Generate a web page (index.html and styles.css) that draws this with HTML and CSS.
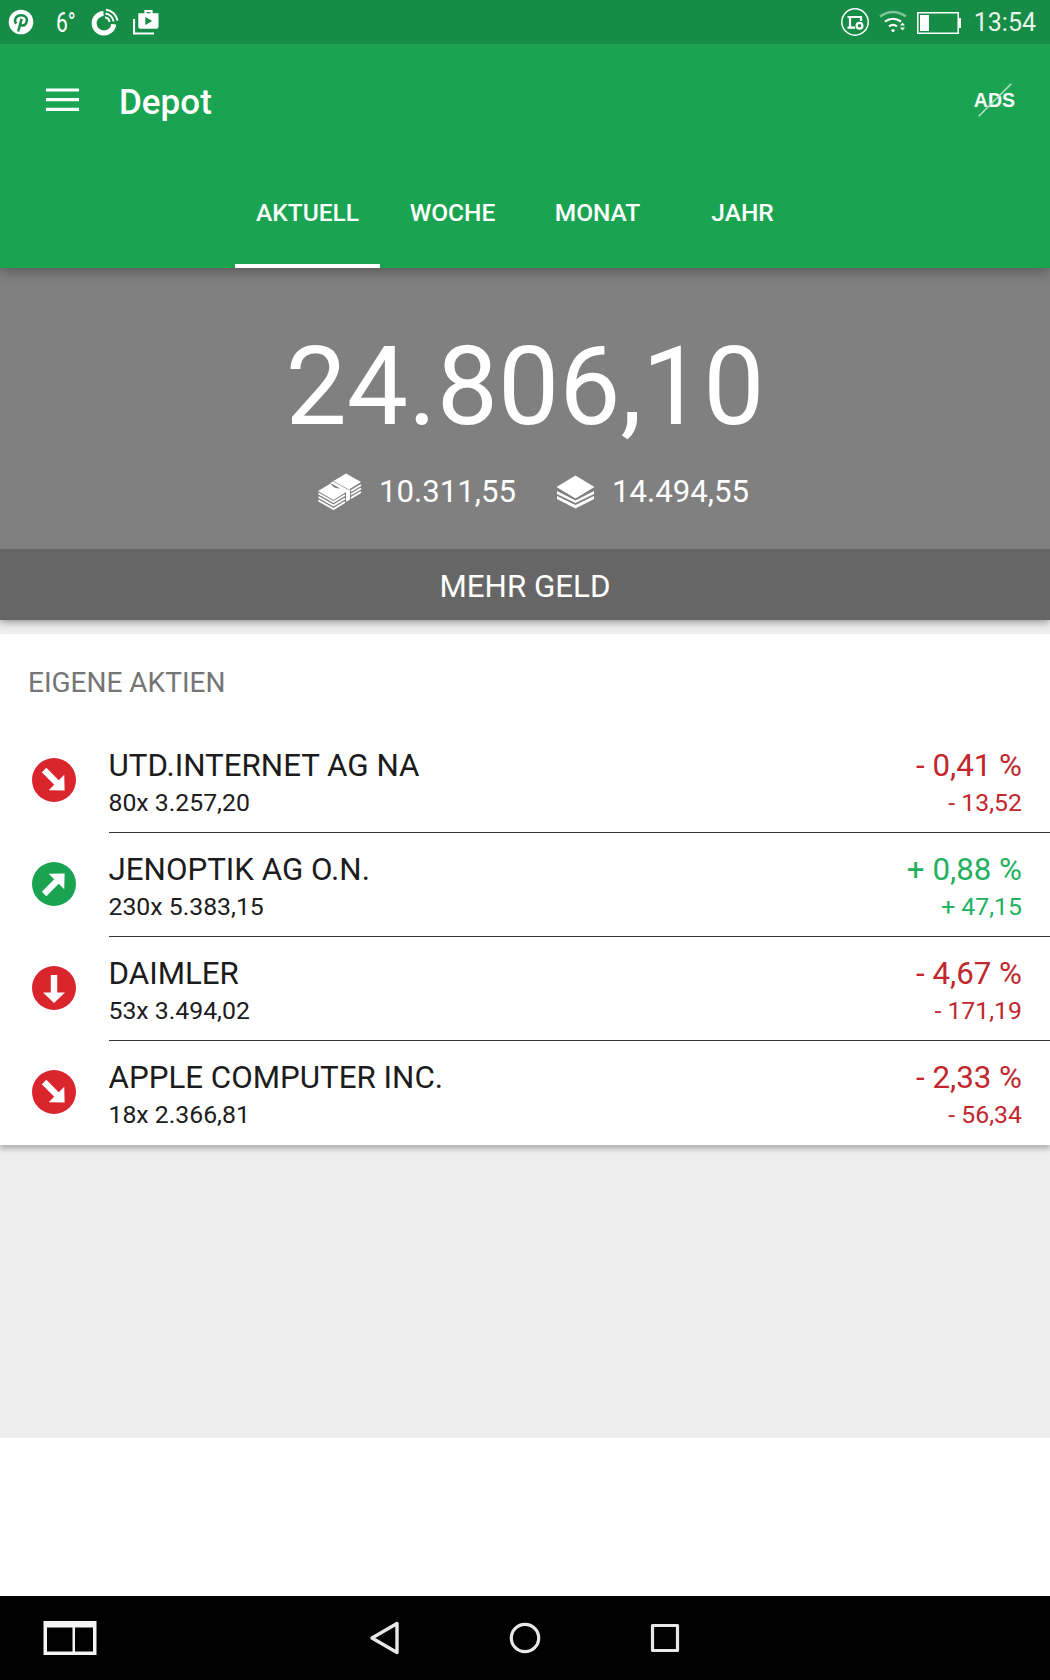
FILE: index.html
```html
<!DOCTYPE html>
<html lang="de">
<head>
    <meta charset="UTF-8">
    <meta name="viewport" content="width=device-width, initial-scale=1.0">
    <title>Depot</title>
    <link rel="stylesheet" href="styles.css">
</head>
<body>

    <!-- Statusleiste -->
    <div class="status-bar">
        <div class="status-left">
            <svg class="icon-pin" width="26" height="26" viewBox="0 0 26 26">
                <circle cx="13" cy="13" r="12.3" fill="#fff"/>
                <path d="M8.2 14.6C5.6 11.4 7.6 6.3 13.2 6.3c4 0 6.2 2.5 5.6 6-.6 3.400-3.300 4.800-5.200 4-1-.4-1.400-1-1.400-1M13.600 9.800L10.200 22.500" fill="none" stroke="#168c46" stroke-width="2.500"/>
            </svg>
            <span class="temperature">6°</span>
            <svg class="icon-ring" width="29" height="29" viewBox="0 0 29 29">
                <path d="M13.500 5.500A9.800 9.800 0 1 0 23.700 16.200" fill="none" stroke="#fff" stroke-width="5"/>
                <path d="M15 9.500a5 5 0 0 1 4.500 4.500M15.500 5.500a9 9 0 0 1 8 8M16 1.700a13 13 0 0 1 11.500 11" fill="none" stroke="#fff" stroke-width="2"/>
            </svg>
            <svg class="icon-store" width="26" height="26" viewBox="0 0 26 26">
                <path d="M1 10v14.500h20" fill="none" stroke="#fff" stroke-width="2.200"/>
                <path d="M12.500 5V2h6v3" fill="none" stroke="#fff" stroke-width="2.200"/>
                <path d="M5.300 4.300h20.200v13.500q0 2-2 2H7.300q-2 0-2-2zM12.300 8v8l7-4z" fill="#fff" fill-rule="evenodd"/>
            </svg>
        </div>
        <div class="status-right">
            <svg class="icon-cast" width="30" height="30" viewBox="0 0 30 30">
                <circle cx="15" cy="15" r="13.200" fill="none" stroke="#fff" stroke-width="1.500"/>
                <path d="M7.500 10H21v4M10 10v10.500M7.500 20.700H15" fill="none" stroke="#fff" stroke-width="2.200"/>
                <circle cx="19.500" cy="18.800" r="2.900" fill="none" stroke="#fff" stroke-width="2.200"/>
            </svg>
            <svg class="icon-wifi" width="28" height="24" viewBox="0 0 28 24">
                <path d="M1 6.500Q14-2.500 27 6.500" fill="none" stroke="#7fc79b" stroke-width="2.400"/>
                <path d="M6 11.500q8-5.500 16 0M10 16.300q4-2.800 8 0" fill="none" stroke="#fff" stroke-width="2.200"/>
                <circle cx="14" cy="20.500" r="1.600" fill="#fff"/>
                <path d="M21 15.500l2.500-3 2.500 3zM21 17.500l2.500 3 2.500-3z" fill="#fff"/>
            </svg>
            <svg class="icon-battery" width="44" height="22" viewBox="0 0 44 22">
                <path d="M.8 .8h40.400v20.400H.8z" fill="none" stroke="#fff" stroke-width="1.500"/>
                <path d="M3 3h9v16H3zM42 6h2v10h-2z" fill="#fff"/>
            </svg>
            <span class="clock">13:54</span>
        </div>
    </div>

    <!-- Kopfbereich mit Tabs -->
    <header class="header">
        <div class="toolbar">
            <svg class="menu-button" width="33" height="24" viewBox="0 0 33 24">
                <path d="M0 2h33M0 11.700h33M0 21.400h33" stroke="#fff" stroke-width="3.200"/>
            </svg>
            <h1>Depot</h1>
            <div class="no-ads">ADS
                <svg width="34" height="34" viewBox="0 0 34 34">
                    <path d="M.7 33.300L33.300.7" stroke="#b4e2c5" stroke-width="1.500"/>
                </svg>
            </div>
        </div>
        <nav class="tabs">
            <div class="tab active">AKTUELL</div>
            <div class="tab">WOCHE</div>
            <div class="tab">MONAT</div>
            <div class="tab">JAHR</div>
        </nav>
    </header>

    <main class="content">
        <!-- Gesamtwert -->
        <section class="summary">
            <div class="total">24.806,10</div>
            <div class="parts">
                <svg width="44" height="37" viewBox="0 0 44 37">
                    <path d="M0 18l13.500-8L29 18.500 15.500 27zM15.500 8L28 .5l15 8.500-12 7.500z" fill="#fff"/>
                    <path d="M14 10.500q2 4 8 4" fill="none" stroke="#808080" stroke-width="2.200"/>
                    <path d="M12.500 10L28 18.800v10l4-2.300V16.500L16 7.500z" fill="#fff"/>
                    <path d="M15 8l16 9" stroke="#808080" stroke-width=".7"/>
                    <path d="M.5 20.500l15 8.500 11.500-7M.5 24l15 8.500L27 25.500M.5 27.500l15 8.500L27 29M33 18l10-6M33 21.500l10-6M33 25l10-6" fill="none" stroke="#fff" stroke-width="1.900"/>
                </svg>
                <span class="cash">10.311,55</span>
                <svg width="39" height="34" viewBox="0 0 39 34">
                    <path d="M19.500.5L38.500 12 19.500 23.500.5 12z" fill="#fff"/>
                    <path d="M1 16v3l18.500 9L38 19v-3l-18.500 9.500zM1 21v3l18.500 9.500L38 24v-3l-18.500 9z" fill="#fff"/>
                </svg>
                <span>14.494,55</span>
            </div>
            <div class="more-money">MEHR GELD</div>
        </section>

        <!-- Aktienliste -->
        <section class="stocks">
            <h2>EIGENE AKTIEN</h2>
            <div class="stock down">
                <svg class="trend" width="44" height="44" viewBox="0 0 44 44">
                    <circle cx="22" cy="22" r="22"/>
                    <path transform="rotate(-45 22 22)" d="M18.800 8h6.400v17.500H33L22 37 11 25.500h7.800z"/>
                </svg>
                <div class="stock-row">
                    <div class="name">UTD.INTERNET AG NA<small>80x 3.257,20</small></div>
                    <div class="change">- 0,41 %<small>- 13,52</small></div>
                </div>
            </div>
            <div class="stock up">
                <svg class="trend" width="44" height="44" viewBox="0 0 44 44">
                    <circle cx="22" cy="22" r="22"/>
                    <path transform="rotate(-135 22 22)" d="M18.800 8h6.400v17.500H33L22 37 11 25.500h7.800z"/>
                </svg>
                <div class="stock-row">
                    <div class="name">JENOPTIK AG O.N.<small>230x 5.383,15</small></div>
                    <div class="change">+ 0,88 %<small>+ 47,15</small></div>
                </div>
            </div>
            <div class="stock down">
                <svg class="trend" width="44" height="44" viewBox="0 0 44 44">
                    <circle cx="22" cy="22" r="22"/>
                    <path d="M18.800 9h6.400v17.500H33L22 37 11 26.500h7.800z"/>
                </svg>
                <div class="stock-row">
                    <div class="name">DAIMLER<small>53x 3.494,02</small></div>
                    <div class="change">- 4,67 %<small>- 171,19</small></div>
                </div>
            </div>
            <div class="stock down">
                <svg class="trend" width="44" height="44" viewBox="0 0 44 44">
                    <circle cx="22" cy="22" r="22"/>
                    <path transform="rotate(-45 22 22)" d="M18.800 8h6.400v17.500H33L22 37 11 25.500h7.800z"/>
                </svg>
                <div class="stock-row">
                    <div class="name">APPLE COMPUTER INC.<small>18x 2.366,81</small></div>
                    <div class="change">- 2,33 %<small>- 56,34</small></div>
                </div>
            </div>
        </section>
    </main>

    <!-- Platz für Werbung -->
    <div class="ad-space"></div>

    <!-- Navigationsleiste -->
    <div class="nav-bar">
        <svg width="54" height="34" viewBox="0 0 54 34">
            <path d="M.5 0h53v34H.5zM4 6.500V30.500h25.500V6.500zM32 6.500V30.500h18V6.500z" fill="#f4f4f4" fill-rule="evenodd"/>
        </svg>
        <div class="nav-buttons">
            <svg width="32" height="34" viewBox="0 0 32 34">
                <path d="M28 2.500v29L3 17z" fill="none" stroke="#e8e8e8" stroke-width="3.400" stroke-linejoin="round"/>
            </svg>
            <svg width="32" height="32" viewBox="0 0 32 32">
                <circle cx="16" cy="16" r="13.700" fill="none" stroke="#e8e8e8" stroke-width="3.200"/>
            </svg>
            <svg width="30" height="30" viewBox="0 0 30 30">
                <rect x="2.500" y="2.500" width="25" height="25" fill="none" stroke="#e8e8e8" stroke-width="3.200" stroke-linejoin="round"/>
            </svg>
        </div>
    </div>

</body>
</html>
```
FILE: styles.css
```css
* {
    box-sizing: border-box;
}

body {
    margin: 0;
    height: 1680px;
    display: flex;
    flex-direction: column;
    font-family: Roboto, sans-serif;
    background-color: #fff;
    color: #1c1c1c;
    overflow: hidden;
}

svg {
    display: block;
    flex: none;
}

/* Statusleiste */
.status-bar {
    height: 44px;
    flex: none;
    display: flex;
    justify-content: space-between;
    padding: 0 14px 0 8px;
    background-color: #168c46;
    color: #fff;
    z-index: 2;
}

.status-left,
.status-right {
    display: flex;
    align-items: center;
}

.temperature {
    width: 20px;
    margin: 2px 0 0 22px;
    font-size: 27px;
    transform: scaleX(0.78);
    transform-origin: left;
}

.icon-ring {
    margin-left: 14px;
}

.icon-store {
    margin-left: 14px;
}

.icon-wifi {
    margin-left: 9px;
}

.icon-battery {
    margin: 2px 13px 0 10px;
}

.clock {
    font-size: 25px;
    margin-top: 1px;
    color: #e8f5ec;
}

/* Kopfbereich */
.header {
    height: 224px;
    flex: none;
    background-color: #1aa452;
    color: #fff;
    box-shadow: 0 3px 12px rgba(0, 0, 0, 0.35);
    z-index: 1;
}

.toolbar {
    height: 112px;
    display: flex;
    align-items: center;
    padding: 0 35px 0 46px;
}

.menu-button {
    margin-top: -1px;
}

h1 {
    margin: 4px 0 0 40px;
    font-size: 35px;
    font-weight: 500;
}

.no-ads {
    position: relative;
    margin-left: auto;
    font: bold 19.5px "Liberation Sans", sans-serif;
}

.no-ads svg {
    position: absolute;
    left: 4px;
    top: -6px;
}

.tabs {
    height: 112px;
    display: flex;
    justify-content: center;
}

.tab {
    width: 145px;
    padding-top: 42px;
    text-align: center;
    font-size: 24.5px;
    line-height: 29px;
    font-weight: 500;
}

.tab.active {
    border-bottom: 4px solid #fff;
}

/* Gesamtwert */
.content {
    height: 1170px;
    flex: none;
    background-color: #eee;
}

.summary {
    height: 352px;
    display: flex;
    flex-direction: column;
    text-align: center;
    background-color: #808080;
    color: #fff;
    box-shadow: 0 2px 8px rgba(0, 0, 0, 0.4);
}

.total {
    margin-top: 55px;
    font-size: 109px;
    line-height: 129px;
}

.parts {
    display: flex;
    justify-content: center;
    align-items: center;
    margin: 21px 0 0 17px;
    font-size: 31.2px;
    line-height: 37px;
}

.parts span {
    margin-left: 17px;
}

.parts .cash {
    margin-right: 40px;
}

.more-money {
    height: 71px;
    margin-top: auto;
    font-size: 31.3px;
    line-height: 75px;
    background-color: #666;
}

/* Aktienliste */
.stocks {
    height: 510.5px;
    margin-top: 14px;
    background-color: #fff;
    box-shadow: 0 4px 5px rgba(0, 0, 0, 0.25);
}

h2 {
    margin: 0;
    height: 95px;
    padding: 32px 28px 0;
    font-size: 28px;
    line-height: 33px;
    font-weight: 400;
    color: #757575;
}

.stock {
    height: 104px;
    display: flex;
    padding-left: 32px;
}

.trend {
    margin-top: 29px;
}

.trend path {
    fill: #fff;
}

.down .trend {
    fill: #d9252b;
}

.up .trend {
    fill: #1aa452;
}

.stock-row {
    flex: 1;
    display: flex;
    justify-content: space-between;
    margin-left: 32.5px;
    padding: 18px 28px 0 0;
    font-size: 31.3px;
    line-height: 37px;
    border-bottom: 1px solid #333;
}

.stock:last-child .stock-row {
    border-bottom: none;
}

.stock small {
    display: block;
    font-size: 24.8px;
    line-height: 38px;
}

.change {
    text-align: right;
}

.down .change {
    color: #c1272d;
}

.up .change {
    color: #22b25f;
}

/* Platz für Werbung */
.ad-space {
    flex: 1;
}

/* Navigationsleiste */
.nav-bar {
    height: 84px;
    flex: none;
    display: flex;
    align-items: center;
    padding-left: 43px;
    background-color: #000;
}

.nav-buttons {
    display: flex;
    align-items: center;
    gap: 108.5px;
    margin-left: 271.5px;
}
```
